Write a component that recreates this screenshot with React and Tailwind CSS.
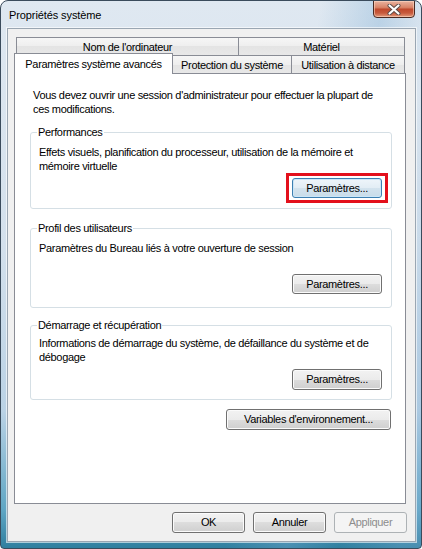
import React from "react";

function CloseButton() {
  return (
    <div className="-mt-px mr-[6px] w-[42px] h-[18px] rounded-b-[4px] border border-[#4a2a22] bg-[linear-gradient(to_bottom,#eab3a0_0%,#d98468_40%,#c0492d_52%,#c75a3c_75%,#e39a7c_100%)] shadow-[inset_0_0_0_1px_rgba(255,220,200,0.55)] flex items-center justify-center">
      <svg width="14" height="11" viewBox="0 0 14 11">
        <path d="M2.5 1.5 L11.5 9.5 M11.5 1.5 L2.5 9.5" stroke="#5b4a46" strokeWidth="4" strokeLinecap="round" />
        <path d="M2.5 1.5 L11.5 9.5 M11.5 1.5 L2.5 9.5" stroke="#ffffff" strokeWidth="2.2" strokeLinecap="round" />
      </svg>
    </div>
  );
}

function Btn({ children, w, h = "h-[20px]", focused, disabled }) {
  const look = disabled
    ? "border-[#adb2b5] bg-[#f4f4f4] text-[#8d8d8d]"
    : focused
    ? "border-[#3c7fb1] bg-[linear-gradient(to_bottom,#eef5fa_0%,#e2edf5_50%,#d3e3ee_50%,#c8dce9_100%)] shadow-[inset_0_0_0_1px_#cbe6f7]"
    : "border-[#707070] bg-[linear-gradient(to_bottom,#f2f2f2_0%,#ebebeb_50%,#dddddd_50%,#cfcfcf_100%)] shadow-[inset_0_0_0_1px_#fbfbfb]";
  return (
    <div className={`${w} ${h} ${look} rounded-[3px] border flex items-center justify-center leading-none`}>
      {children}
    </div>
  );
}

function Tab({ children, w, className = "" }) {
  return (
    <div
      className={`${w} h-[18px] border-t border-l border-r border-[#898c95] bg-[linear-gradient(to_bottom,#f6f6f6_0%,#eeeeee_50%,#e4e4e4_50%,#e8e8e8_100%)] flex items-center justify-center pt-[1px] whitespace-nowrap ${className}`}
    >
      {children}
    </div>
  );
}

function Group({ title, className, children }) {
  return (
    <fieldset className={`ml-[15px] w-[362px] min-w-0 rounded-[3px] border border-[#d5dfe5] pl-[8px] pr-[9px] ${className}`}>
      <legend className="-ml-[2px] px-[1px] leading-[14px]">{title}</legend>
      {children}
    </fieldset>
  );
}

export default function App() {
  return (
    <div className="w-[422px] h-[549px] flex flex-col overflow-hidden rounded-t-[8px] rounded-b-[4px] border border-[#3a4b5c] bg-[linear-gradient(100deg,rgba(255,255,255,0)_62%,rgba(120,170,210,0.35)_74%,rgba(255,255,255,0)_84%,rgba(130,175,215,0.3)_96%),linear-gradient(180deg,#dfe8f1_0%,#d3e0ec_45%,#bad2e5_75%,#5fa6c4_93%,#2f7f9f_100%)] font-['Liberation_Sans',Arial,sans-serif] text-[11px] tracking-[-0.33px] text-black">
      <div className="h-[27px] shrink-0 flex items-start justify-between">
        <span className="ml-[8px] mt-[7px] text-[11px] tracking-[-0.1px] leading-[14px]">Propriétés système</span>
        <CloseButton />
      </div>

      <div className="ml-[6px] w-[409px] h-[514px] shrink-0 flex flex-col border border-[#9aa6b2] bg-[#f0f0f0] pt-[8px] shadow-[0_0_0_1px_rgba(255,255,255,0.6)]">
        <div className="ml-[6px] w-[392px] flex flex-col">
          <div className="ml-[2px] flex">
            <Tab w="w-[223px]">Nom de l'ordinateur</Tab>
            <Tab w="w-[167px]" className="-ml-px">Matériel</Tab>
          </div>
          <div className="h-[18px] flex items-start">
            <div className="relative z-10 -mt-[2px] w-[159px] h-[21px] border-t border-l border-r border-[#898c95] bg-white flex items-center justify-center whitespace-nowrap">
              Paramètres système avancés
            </div>
            <Tab w="w-[120px]" className="-ml-px">Protection du système</Tab>
            <Tab w="w-[114px]" className="-ml-px">Utilisation à distance</Tab>
          </div>

          <div className="w-[392px] h-[431px] border border-[#898c95] bg-white flex flex-col">
            <p className="mt-[14px] ml-[18px] leading-[14px] whitespace-nowrap">
              Vous devez ouvrir une session d'administrateur pour effectuer la plupart de
              <br />
              ces modifications.
            </p>

            <Group title="Performances" className="mt-[9px] pb-[10px]">
              <p className="mt-[6px] leading-[14px] whitespace-nowrap">
                Effets visuels, planification du processeur, utilisation de la mémoire et
                <br />
                mémoire virtuelle
              </p>
              <div className="mt-[5px] flex justify-end">
                <div className="-mr-[6px] -my-[5px] border-[3px] border-[#e3101c] px-[3px] py-[2px]">
                  <Btn w="w-[90px]" focused>Paramètres...</Btn>
                </div>
              </div>
            </Group>

            <Group title="Profil des utilisateurs" className="mt-[12px] pb-[13px]">
              <p className="mt-[6px] leading-[14px] whitespace-nowrap">
                Paramètres du Bureau liés à votre ouverture de session
              </p>
              <div className="mt-[19px] flex justify-end">
                <Btn w="w-[90px]">Paramètres...</Btn>
              </div>
            </Group>

            <Group title="Démarrage et récupération" className="mt-[10px] pb-[9px]">
              <p className="mt-[4px] leading-[14px] whitespace-nowrap">
                Informations de démarrage du système, de défaillance du système et de
                <br />
                débogage
              </p>
              <div className="mt-[5px] flex justify-end">
                <Btn w="w-[90px]" h="h-[21px]">Paramètres...</Btn>
              </div>
            </Group>

            <div className="mt-[9px] mr-[14px] flex justify-end">
              <Btn w="w-[165px]" h="h-[21px]">Variables d'environnement...</Btn>
            </div>
          </div>
        </div>

        <div className="mt-[8px] mr-[8px] flex justify-end gap-[8px]">
          <Btn w="w-[73px]" h="h-[21px]">OK</Btn>
          <Btn w="w-[73px]" h="h-[21px]">Annuler</Btn>
          <Btn w="w-[73px]" h="h-[21px]" disabled>Appliquer</Btn>
        </div>
      </div>
    </div>
  );
}
